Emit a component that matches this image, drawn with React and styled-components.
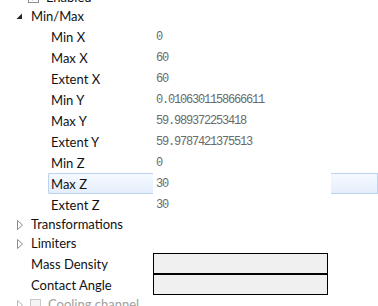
import React from 'react';
import styled, { createGlobalStyle } from 'styled-components';

const Global = createGlobalStyle`
  html, body { margin: 0; padding: 0; background: #fff; overflow: hidden; }
  body { font-family: Lato, "Liberation Sans", sans-serif; }
`;

const Tree = styled.div`
  margin-top: -12px;
  width: 378px;
  display: flex;
  flex-direction: column;
`;

const GroupRow = styled.div`
  display: flex;
  align-items: center;
  height: ${p => p.h || 19}px;
  padding-left: ${p => p.indent || 0}px;
  color: ${p => (p.disabled ? '#a0a0a0' : '#111')};
  font-size: 13px;
`;

const ExpanderBox = styled.span`
  width: 17px;
  height: 19px;
  display: flex;
  align-items: center;
  justify-content: center;
`;

const Label = styled.span`
  white-space: nowrap;
  line-height: 19px;
`;

const CheckBox = styled.span`
  width: 11px;
  height: 11px;
  box-sizing: border-box;
  border: 1px solid ${p => (p.disabled ? '#c8c8c8' : '#8e8f8f')};
  background: ${p => (p.disabled ? '#f4f4f4' : 'linear-gradient(#f0f0f0, #fff)')};
  margin-right: 7px;
  margin-left: ${p => p.ml || 0}px;
  display: flex;
  align-items: center;
  justify-content: center;
`;

const PropRow = styled.div`
  display: flex;
  height: 21px;
  font-size: 13px;
`;

const LabelCell = styled.div`
  width: 153px;
  flex-shrink: 0;
  display: flex;
  padding-left: ${p => p.indent}px;
  box-sizing: border-box;
`;

const LabelBox = styled.div`
  flex: 1;
  display: flex;
  align-items: center;
  padding-left: 3px;
  color: #111;
  box-sizing: border-box;
  ${p => p.selected && `
    background: linear-gradient(#f6faff, #e4eefb);
    border: 1px solid #bcd3ee;
    border-right: none;
    border-radius: 2px 0 0 2px;
    padding-left: 2px;
  `}
`;

const ValueCell = styled.div`
  flex: 1;
  display: flex;
`;

const ValueText = styled.div`
  width: ${p => (p.selected ? '175px' : 'auto')};
  flex: ${p => (p.selected ? 'none' : '1')};
  background: #fff;
  padding-left: 3px;
  display: flex;
  align-items: center;
  font-family: "Liberation Mono", "DejaVu Sans Mono", monospace;
  font-size: 12px;
  letter-spacing: -1.2px;
  color: #6a6a6a;
  white-space: nowrap;
`;

const SelTail = styled.div`
  flex: 1;
  background: linear-gradient(#f6faff, #e4eefb);
  border: 1px solid #bcd3ee;
  border-left: none;
`;

const Field = styled.div`
  width: 175px;
  height: 21px;
  box-sizing: border-box;
  border: 1px solid #000;
  background: #f0f0f0;
`;

const Expanded = () => (
  <svg width="7" height="7" viewBox="0 0 7 7">
    <polygon points="6,0.5 6,6 0.5,6" fill="#262626" />
  </svg>
);

const Collapsed = ({ color = '#8c8c8c' }) => (
  <svg width="6" height="10" viewBox="0 0 6 10">
    <polygon points="0.5,0.5 5.5,5 0.5,9.5" fill="none" stroke={color} strokeWidth="1" />
  </svg>
);

const Check = () => (
  <svg width="9" height="9" viewBox="0 0 9 9">
    <path d="M1.5 4.5 L3.5 6.5 L7.5 1.5" fill="none" stroke="#4a5a7a" strokeWidth="1.4" />
  </svg>
);

const minmax = [
  ['Min X', '0'],
  ['Max X', '60'],
  ['Extent X', '60'],
  ['Min Y', '0.0106301158666611'],
  ['Max Y', '59.989372253418'],
  ['Extent Y', '59.9787421375513'],
  ['Min Z', '0'],
  ['Max Z', '30', true],
  ['Extent Z', '30'],
];

export default function App() {
  return (
    <>
      <Global />
      <Tree>
        <GroupRow indent={14}>
          <CheckBox ml={14}><Check /></CheckBox>
          <Label>Enabled</Label>
        </GroupRow>
        <GroupRow indent={11}>
          <ExpanderBox><Expanded /></ExpanderBox>
          <Label style={{ marginLeft: 3 }}>Min/Max</Label>
        </GroupRow>
        {minmax.map(([name, value, selected]) => (
          <PropRow key={name}>
            <LabelCell indent={48}>
              <LabelBox selected={selected}>{name}</LabelBox>
            </LabelCell>
            <ValueCell>
              <ValueText selected={selected}>{value}</ValueText>
              {selected && <SelTail />}
            </ValueCell>
          </PropRow>
        ))}
        <GroupRow indent={11}>
          <ExpanderBox><Collapsed /></ExpanderBox>
          <Label style={{ marginLeft: 3 }}>Transformations</Label>
        </GroupRow>
        <GroupRow indent={11}>
          <ExpanderBox><Collapsed /></ExpanderBox>
          <Label style={{ marginLeft: 3 }}>Limiters</Label>
        </GroupRow>
        <PropRow>
          <LabelCell indent={28}>
            <LabelBox>Mass Density</LabelBox>
          </LabelCell>
          <ValueCell><Field /></ValueCell>
        </PropRow>
        <PropRow>
          <LabelCell indent={28}>
            <LabelBox>Contact Angle</LabelBox>
          </LabelCell>
          <ValueCell><Field /></ValueCell>
        </PropRow>
        <GroupRow indent={11} disabled>
          <ExpanderBox><Collapsed color="#b5b5b5" /></ExpanderBox>
          <CheckBox disabled ml={2} />
          <Label>Cooling channel</Label>
        </GroupRow>
      </Tree>
    </>
  );
}
